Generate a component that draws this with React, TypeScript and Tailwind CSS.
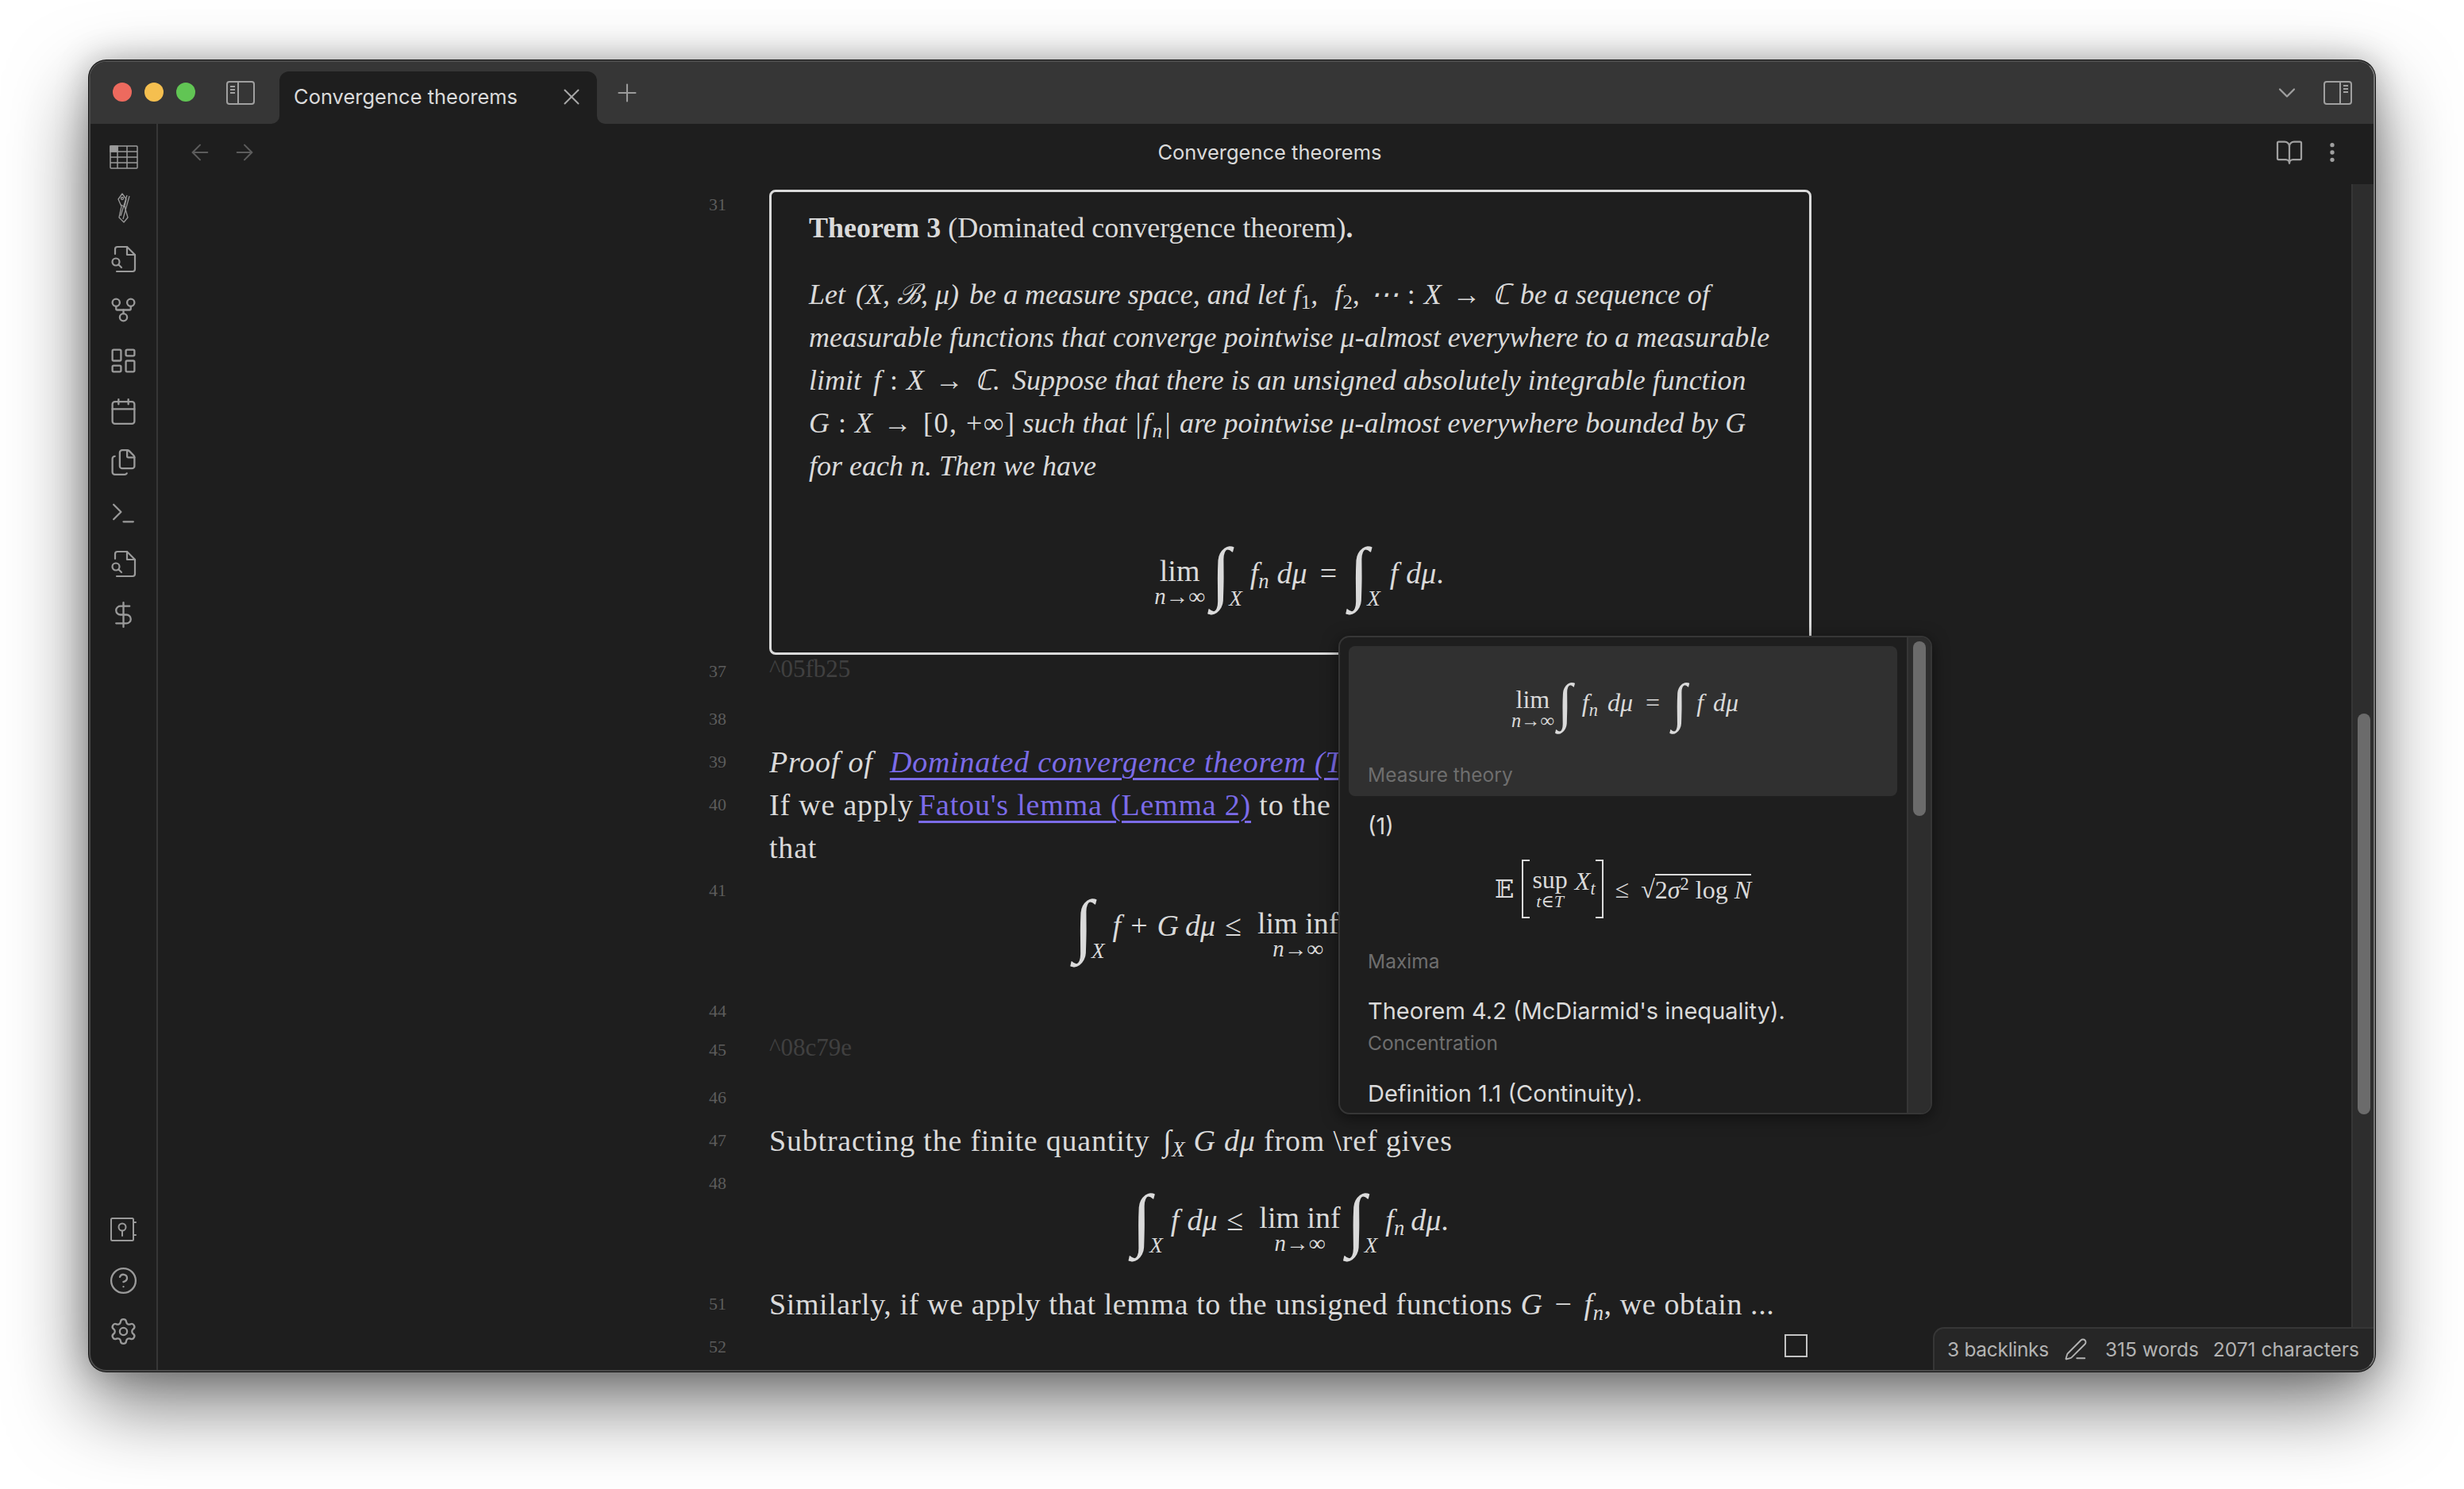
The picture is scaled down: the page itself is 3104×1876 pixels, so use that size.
import type { ReactNode } from 'react'
import {
  ArrowLeft,
  ArrowRight,
  BookOpen,
  Calendar,
  ChevronDown,
  CircleHelp,
  DollarSign,
  EllipsisVertical,
  Files,
  GitFork,
  LayoutDashboard,
  PenLine,
  Plus,
  Settings,
  Terminal,
  X,
} from 'lucide-react'

const serif = "font-['Liberation_Serif','DejaVu_Serif',serif]"

function TableIcon() {
  return (
    <svg width="36" height="30" viewBox="0 0 36 30" fill="none" stroke="#9a9a9a" strokeWidth="1.5">
      <rect x="1" y="1" width="34" height="28" rx="1" />
      <rect x="1" y="1" width="9" height="7" fill="#9a9a9a" />
      <path d="M1 8h34M1 15h34M1 22h34M10 1v28M22 1v28" />
    </svg>
  )
}

function PenRulerIcon() {
  return (
    <svg width="18" height="38" viewBox="0 0 18 38" fill="none" stroke="#9a9a9a" strokeWidth="1.3" strokeLinejoin="round">
      <path d="M7 1l5 7-2 9 4 14-5 6-6-6 3-14-4-9z" />
      <circle cx="7" cy="7" r="1.5" />
      <path d="M16 4L8 33M13 3L5 29M5 15l6 3" />
    </svg>
  )
}

function FileMagnifierIcon() {
  return (
    <svg width="34" height="36" viewBox="0 0 34 36" fill="none" stroke="#9a9a9a" strokeWidth="2.2" strokeLinejoin="round" strokeLinecap="round">
      <path d="M6 12V6a3 3 0 0 1 3-3h12l10 10v18a3 3 0 0 1-3 3H8" />
      <path d="M21 3v10h10" />
      <circle cx="7" cy="22" r="4.5" />
      <path d="M10.5 25.5l3.5 3.5" />
    </svg>
  )
}

function VaultIcon() {
  return (
    <svg width="34" height="32" viewBox="0 0 34 32" fill="none" stroke="#9a9a9a" strokeWidth="2">
      <rect x="1" y="2" width="28" height="28" rx="1.5" />
      <circle cx="15" cy="13" r="4.5" />
      <path d="M15 18v6M29 7h3M29 23h3" strokeLinecap="round" />
    </svg>
  )
}

function SidebarLeftIcon() {
  return (
    <svg width="36" height="30" viewBox="0 0 36 30" fill="none" stroke="#a0a0a0" strokeWidth="2">
      <rect x="1" y="1" width="34" height="28" rx="3" />
      <path d="M15 1v28M5 7h6M5 11h6M5 15h6" />
    </svg>
  )
}

function SidebarRightIcon() {
  return (
    <svg width="36" height="30" viewBox="0 0 36 30" fill="none" stroke="#a0a0a0" strokeWidth="2">
      <rect x="1" y="1" width="34" height="28" rx="3" />
      <path d="M21 1v28M25 6h6M25 10h6M25 14h6" />
    </svg>
  )
}

function SideButton({ children }: { children: ReactNode }) {
  return <div className="flex h-[64px] w-full items-center justify-center">{children}</div>
}

const sideIcon = { size: 37, strokeWidth: 1.5, color: '#9a9a9a' }

function Sidebar() {
  return (
    <aside className="flex w-[85px] shrink-0 flex-col justify-between border-r-2 border-[#363636] pb-[17px] pt-[10px]">
      <div>
        <SideButton><TableIcon /></SideButton>
        <SideButton><PenRulerIcon /></SideButton>
        <SideButton><FileMagnifierIcon /></SideButton>
        <SideButton><GitFork {...sideIcon} /></SideButton>
        <SideButton><LayoutDashboard {...sideIcon} /></SideButton>
        <SideButton><Calendar {...sideIcon} /></SideButton>
        <SideButton><Files {...sideIcon} /></SideButton>
        <SideButton><Terminal {...sideIcon} /></SideButton>
        <SideButton><FileMagnifierIcon /></SideButton>
        <SideButton><DollarSign {...sideIcon} /></SideButton>
      </div>
      <div>
        <SideButton><VaultIcon /></SideButton>
        <SideButton><CircleHelp {...sideIcon} /></SideButton>
        <SideButton><Settings {...sideIcon} /></SideButton>
      </div>
    </aside>
  )
}

function TitleBar() {
  return (
    <header className="flex h-[78px] shrink-0 items-start bg-[#363636] pl-[28px] pr-[27px]">
      <div className="mt-[26px] flex gap-4">
        <span className="h-6 w-6 rounded-full bg-[#ed6a5e]" />
        <span className="h-6 w-6 rounded-full bg-[#f5bf4f]" />
        <span className="h-6 w-6 rounded-full bg-[#61c554]" />
      </div>
      <div className="ml-[39px] mt-[24px]"><SidebarLeftIcon /></div>
      <div className="relative ml-[31px] mt-[12px] flex h-[66px] w-[400px] items-center justify-between rounded-t-[12px] bg-[#1e1e1e] pb-[2px] pl-[18px] pr-[15px] text-[25.5px] text-[#dadada]">
        <span className="absolute bottom-0 left-[-10px] h-[10px] w-[10px] bg-[#1e1e1e]"><span className="block h-full w-full rounded-br-[10px] bg-[#363636]" /></span>
        <span>Convergence theorems</span>
        <X size={34} strokeWidth={1.4} color="#a8a8a8" />
        <span className="absolute bottom-0 right-[-10px] h-[10px] w-[10px] bg-[#1e1e1e]"><span className="block h-full w-full rounded-bl-[10px] bg-[#363636]" /></span>
      </div>
      <div className="ml-[20px] mt-[21px]"><Plus size={36} strokeWidth={1.4} color="#9a9a9a" /></div>
      <div className="ml-auto mt-[21px]"><ChevronDown size={36} strokeWidth={1.5} color="#a0a0a0" /></div>
      <div className="ml-[28px] mt-[24px]"><SidebarRightIcon /></div>
    </header>
  )
}

function NavBar() {
  return (
    <div className="flex h-[76px] shrink-0 items-center pb-[4px]">
      <div className="flex w-[160px] gap-[24px] pl-[37px]">
        <ArrowLeft size={32} strokeWidth={1.5} color="#5c5c5c" />
        <ArrowRight size={32} strokeWidth={1.5} color="#5c5c5c" />
      </div>
      <div className="flex-1 text-center text-[25.5px] text-[#dadada]">Convergence theorems</div>
      <div className="flex w-[150px] items-center gap-[20px] pl-[26px]">
        <BookOpen size={36} strokeWidth={1.5} color="#a0a0a0" />
        <EllipsisVertical size={32} strokeWidth={2} color="#a0a0a0" />
      </div>
    </div>
  )
}

function Row({ n, rowClass, numClass, children }: { n: number; rowClass: string; numClass: string; children?: ReactNode }) {
  return (
    <div className={`flex shrink-0 ${rowClass}`}>
      <div className={`w-[716px] shrink-0 text-right text-[22px] text-[#5c5c5c] ${serif} ${numClass}`}>{n}</div>
      <div className="ml-[54px] w-[1313px] shrink-0">{children}</div>
    </div>
  )
}

function Sub({ children, className = '' }: { children: ReactNode; className?: string }) {
  return <sub className={`text-[0.7em] leading-none ${className}`}>{children}</sub>
}

function Lim({ inf, small }: { inf?: boolean; small?: boolean }) {
  return (
    <span className={`inline-flex flex-col items-center ${small ? 'mx-[5px] pt-[14px]' : 'mx-[8px] pt-[20px]'}`}>
      <span className="leading-[1em] not-italic">{inf ? 'lim inf' : 'lim'}</span>
      <span className="text-[0.76em] italic leading-[0.9em]">n→∞</span>
    </span>
  )
}

function BigInt({ sub, small }: { sub?: boolean; small?: boolean }) {
  return (
    <span className="inline-flex items-end">
      <span className={small ? 'text-[66px] leading-[70px]' : 'text-[88px] leading-[96px]'}>∫</span>
      {sub && <span className="mb-[2px] ml-[-2px] text-[27px] italic leading-[28px]">X</span>}
    </span>
  )
}

function Formula({ children, className = '' }: { children: ReactNode; className?: string }) {
  return (
    <div className={`flex items-center whitespace-nowrap text-[38px] text-[#dadada] ${serif} ${className}`}>
      {children}
    </div>
  )
}

function M({ children }: { children: ReactNode }) {
  return <i className="italic">{children}</i>
}

// relation symbols sit wider apart than plain italic text
function Colon() {
  return <span className="mx-[11px] not-italic">:</span>
}

function Arrow() {
  return <span className="mx-[14px] not-italic">→</span>
}

function Popup() {
  return (
    <div className="absolute left-[1572px] top-[723px] z-10 flex h-[603px] w-[748px] overflow-hidden rounded-[14px] border-2 border-[#363636] bg-[#1e1e1e] shadow-[0_4px_20px_rgba(0,0,0,0.5)]">
      <div className="min-w-0 flex-1 pl-[11px] pr-[12px] pt-[11px] text-[#dadada]">
        <div className="h-[189px] rounded-[8px] bg-[#303030] px-[24px]">
          <div className="flex h-[142px] items-center justify-center">
            <div className={`flex items-center whitespace-nowrap text-[32px] ${serif}`}>
              <Lim small />
              <BigInt small />
              <span className="ml-[12px]"><M>f<Sub>n</Sub></M></span>
              <span className="ml-[12px]"><M>dμ</M></span>
              <span className="mx-[16px]">=</span>
              <BigInt small />
              <span className="ml-[12px]"><M>f</M></span>
              <span className="ml-[12px]"><M>dμ</M></span>
            </div>
          </div>
          <div className="text-[24.5px] leading-[40px] text-[#6e6e6e]">Measure theory</div>
        </div>
        <div className="px-[24px]">
          <div className="mt-[18px] text-[29px] leading-[40px]">(1)</div>
          <div className="mt-[17px] flex h-[84px] items-center justify-center">
            <div className={`flex items-center whitespace-nowrap text-[32px] ${serif}`}>
              <span className="mr-[10px]">𝔼</span>
              <span className="flex h-[74px] w-[10px] border-y-2 border-l-2 border-[#dadada]" />
              <span className="mx-[3px] inline-flex flex-col items-center">
                <span className="leading-[1em]">sup</span>
                <span className="text-[22px] italic leading-[24px]">t∈T</span>
              </span>
              <span className="mb-[20px] ml-[6px]"><M>X<Sub>t</Sub></M></span>
              <span className="flex h-[74px] w-[10px] border-y-2 border-r-2 border-[#dadada]" />
              <span className="mx-[15px]">≤</span>
              <span>√</span>
              <span className="border-t-2 border-[#dadada] leading-[36px]">2<M>σ</M><sup className="text-[0.7em]">2</sup> log <M>N</M></span>
            </div>
          </div>
          <div className="mt-[29px] text-[24.5px] leading-[40px] text-[#6e6e6e]">Maxima</div>
          <div className="mt-[23px] text-[29px] leading-[40px]">Theorem 4.2 (McDiarmid's inequality).</div>
          <div className="text-[24.5px] leading-[40px] text-[#6e6e6e]">Concentration</div>
          <div className="mt-[24px] text-[29px] leading-[40px]">Definition 1.1 (Continuity).</div>
        </div>
      </div>
      <div className="w-[30px] shrink-0 border-l-2 border-[#363636] bg-[#2d2d2d] pl-[6px] pt-[5px]">
        <div className="h-[220px] w-[16px] rounded-full bg-[#6b6b6b]" />
      </div>
    </div>
  )
}

function Editor() {
  return (
    <div className={`min-w-0 flex-1 overflow-hidden text-[#dadada] ${serif}`}>
      <Row n={31} rowClass="h-[593px]" numClass="leading-[52px]">
        <div className="mt-[7px] box-border h-[586px] rounded-[8px] border-[3px] border-[#dadada] pl-[47px] pr-[25px] text-[36px]">
          <p className="leading-[90px]"><b>Theorem 3</b> (Dominated convergence theorem)<b>.</b></p>
          <p className="mt-[12px] whitespace-nowrap italic leading-[54px]">
            Let <span className="mx-[4px]">(X, ℬ, μ)</span> be a measure space, and let f<Sub className="not-italic">1</Sub>, <span className="ml-[12px]">f<Sub className="not-italic">2</Sub></span>, <span className="ml-[4px]">⋯</span><Colon />X<Arrow />ℂ<span className="ml-[12px]">be a sequence of</span><br />
            measurable functions that converge pointwise μ-almost everywhere to a measurable<br />
            limit <span className="ml-[6px]">f</span><Colon />X<Arrow />ℂ. <span className="ml-[6px]">Suppose</span> that there is an unsigned absolutely integrable function<br />
            G<Colon />X<Arrow /><span className="not-italic tracking-[1.5px]">[0, +∞]</span> such that <span className="tracking-[1.5px]">|f<Sub>n</Sub>|</span> are pointwise μ-almost everywhere bounded by G<br />
            for each n. Then we have
          </p>
          <Formula className="mt-[60px] justify-center pr-[8px]">
            <Lim />
            <BigInt sub />
            <span className="ml-[10px]"><M>f<Sub>n</Sub></M></span>
            <span className="ml-[10px]"><M>dμ</M></span>
            <span className="mx-[16px]">=</span>
            <BigInt sub />
            <span className="ml-[12px]"><M>f</M></span>
            <span className="ml-[10px]"><M>dμ</M>.</span>
          </Formula>
        </div>
      </Row>
      <Row n={37} rowClass="h-[54px]" numClass="leading-[42px]">
        <div className="text-[31px] leading-[36px] text-[#404040]">^05fb25</div>
      </Row>
      <Row n={38} rowClass="h-[54px]" numClass="leading-[54px]" />
      <Row n={39} rowClass="h-[54px]" numClass="leading-[54px]">
        <div className="w-[717px] overflow-hidden whitespace-nowrap text-[38px] italic leading-[54px] tracking-[0.8px]">
          Proof of <a className="ml-[11px] text-[#7b6be8] underline decoration-[3px] underline-offset-[7px]">Dominated convergence theorem (Th</a>
        </div>
      </Row>
      <Row n={40} rowClass="h-[108px]" numClass="leading-[54px]">
        <div className="w-[717px] overflow-hidden whitespace-nowrap text-[38px] leading-[54px] tracking-[0.8px]">
          If we apply <a className="ml-[-4px] text-[#7b6be8] underline decoration-[3px] underline-offset-[7px]">Fatou's lemma (Lemma 2)</a> to the<br />that
        </div>
      </Row>
      <Row n={41} rowClass="h-[152px]" numClass="leading-[54px]">
        <Formula className="ml-[384px] mt-[23px]">
          <BigInt sub />
          <span className="ml-[10px]"><M>f</M></span>
          <span className="mx-[12px]">+</span>
          <M>G</M>
          <span className="ml-[8px]"><M>dμ</M></span>
          <span className="mx-[12px]">≤</span>
          <Lim inf />
        </Formula>
      </Row>
      <Row n={44} rowClass="h-[49px]" numClass="leading-[54px]" />
      <Row n={45} rowClass="h-[60px]" numClass="leading-[54px]">
        <div className="text-[31px] leading-[48px] text-[#404040]">^08c79e</div>
      </Row>
      <Row n={46} rowClass="h-[54px]" numClass="leading-[54px]" />
      <Row n={47} rowClass="h-[54px]" numClass="leading-[54px]">
        <div className="whitespace-nowrap text-[38px] leading-[54px] tracking-[0.8px]">
          Subtracting the finite quantity <span className="ml-[6px] italic">∫<Sub>X</Sub> G dμ</span> from \ref gives
        </div>
      </Row>
      <Row n={48} rowClass="h-[152px]" numClass="leading-[54px]">
        <Formula className="mt-[25px] justify-center">
          <BigInt sub />
          <span className="ml-[10px]"><M>f</M></span>
          <span className="ml-[10px]"><M>dμ</M></span>
          <span className="mx-[12px]">≤</span>
          <Lim inf />
          <BigInt sub />
          <span className="ml-[10px]"><M>f<Sub>n</Sub></M></span>
          <span className="ml-[8px]"><M>dμ</M>.</span>
        </Formula>
      </Row>
      <Row n={51} rowClass="h-[54px]" numClass="leading-[54px]">
        <div className="whitespace-nowrap text-[38px] leading-[54px] tracking-[0.6px]">
          Similarly, if we apply that lemma to the unsigned functions <M>G</M><span className="mx-[15px]">−</span><M>f<Sub>n</Sub></M>, we obtain ...
        </div>
      </Row>
      <Row n={52} rowClass="h-[54px]" numClass="leading-[54px]">
        <div className="ml-[1279px] mt-[11px] h-[29px] w-[29px] border-2 border-[#c4c4c4]" />
      </Row>
    </div>
  )
}

function StatusBar() {
  return (
    <div className="absolute bottom-0 right-0 z-10 flex h-[54px] w-[555px] items-center rounded-tl-[14px] border-l-2 border-t-2 border-[#363636] bg-[#262626] pl-[16px] text-[24.5px] text-[#b3b3b3]">
      <span className="tracking-[-0.3px]">3 backlinks</span>
      <span className="ml-[19px]"><PenLine size={30} strokeWidth={1.5} /></span>
      <span className="ml-[22px]">315 words</span>
      <span className="ml-[18px]">2071 characters</span>
    </div>
  )
}

export default function App() {
  return (
    <div className="h-[1876px] w-[3104px] overflow-hidden bg-white pl-[112px] pt-[76px] font-['Inter',sans-serif]">
      <div className="relative flex h-[1652px] w-[2880px] flex-col overflow-hidden rounded-[22px] border-2 border-[#4a4a4a] border-r-[#777777] bg-[#1e1e1e] shadow-[0_0_0_1px_#111,0_0_40px_rgba(0,0,0,0.25),0_40px_100px_rgba(0,0,0,0.55)]">
        <TitleBar />
        <div className="flex min-h-0 flex-1">
          <Sidebar />
          <div className="flex min-w-0 flex-1 flex-col">
            <NavBar />
            <div className="flex min-h-0 flex-1">
              <Editor />
              <div className="w-[28px] shrink-0 border-l-2 border-[#363636] bg-[#2d2d2d] pl-[6px] pt-[667px]">
                <div className="h-[505px] w-[16px] rounded-full bg-[#6b6b6b]" />
              </div>
            </div>
          </div>
        </div>
        <Popup />
        <StatusBar />
      </div>
    </div>
  )
}
